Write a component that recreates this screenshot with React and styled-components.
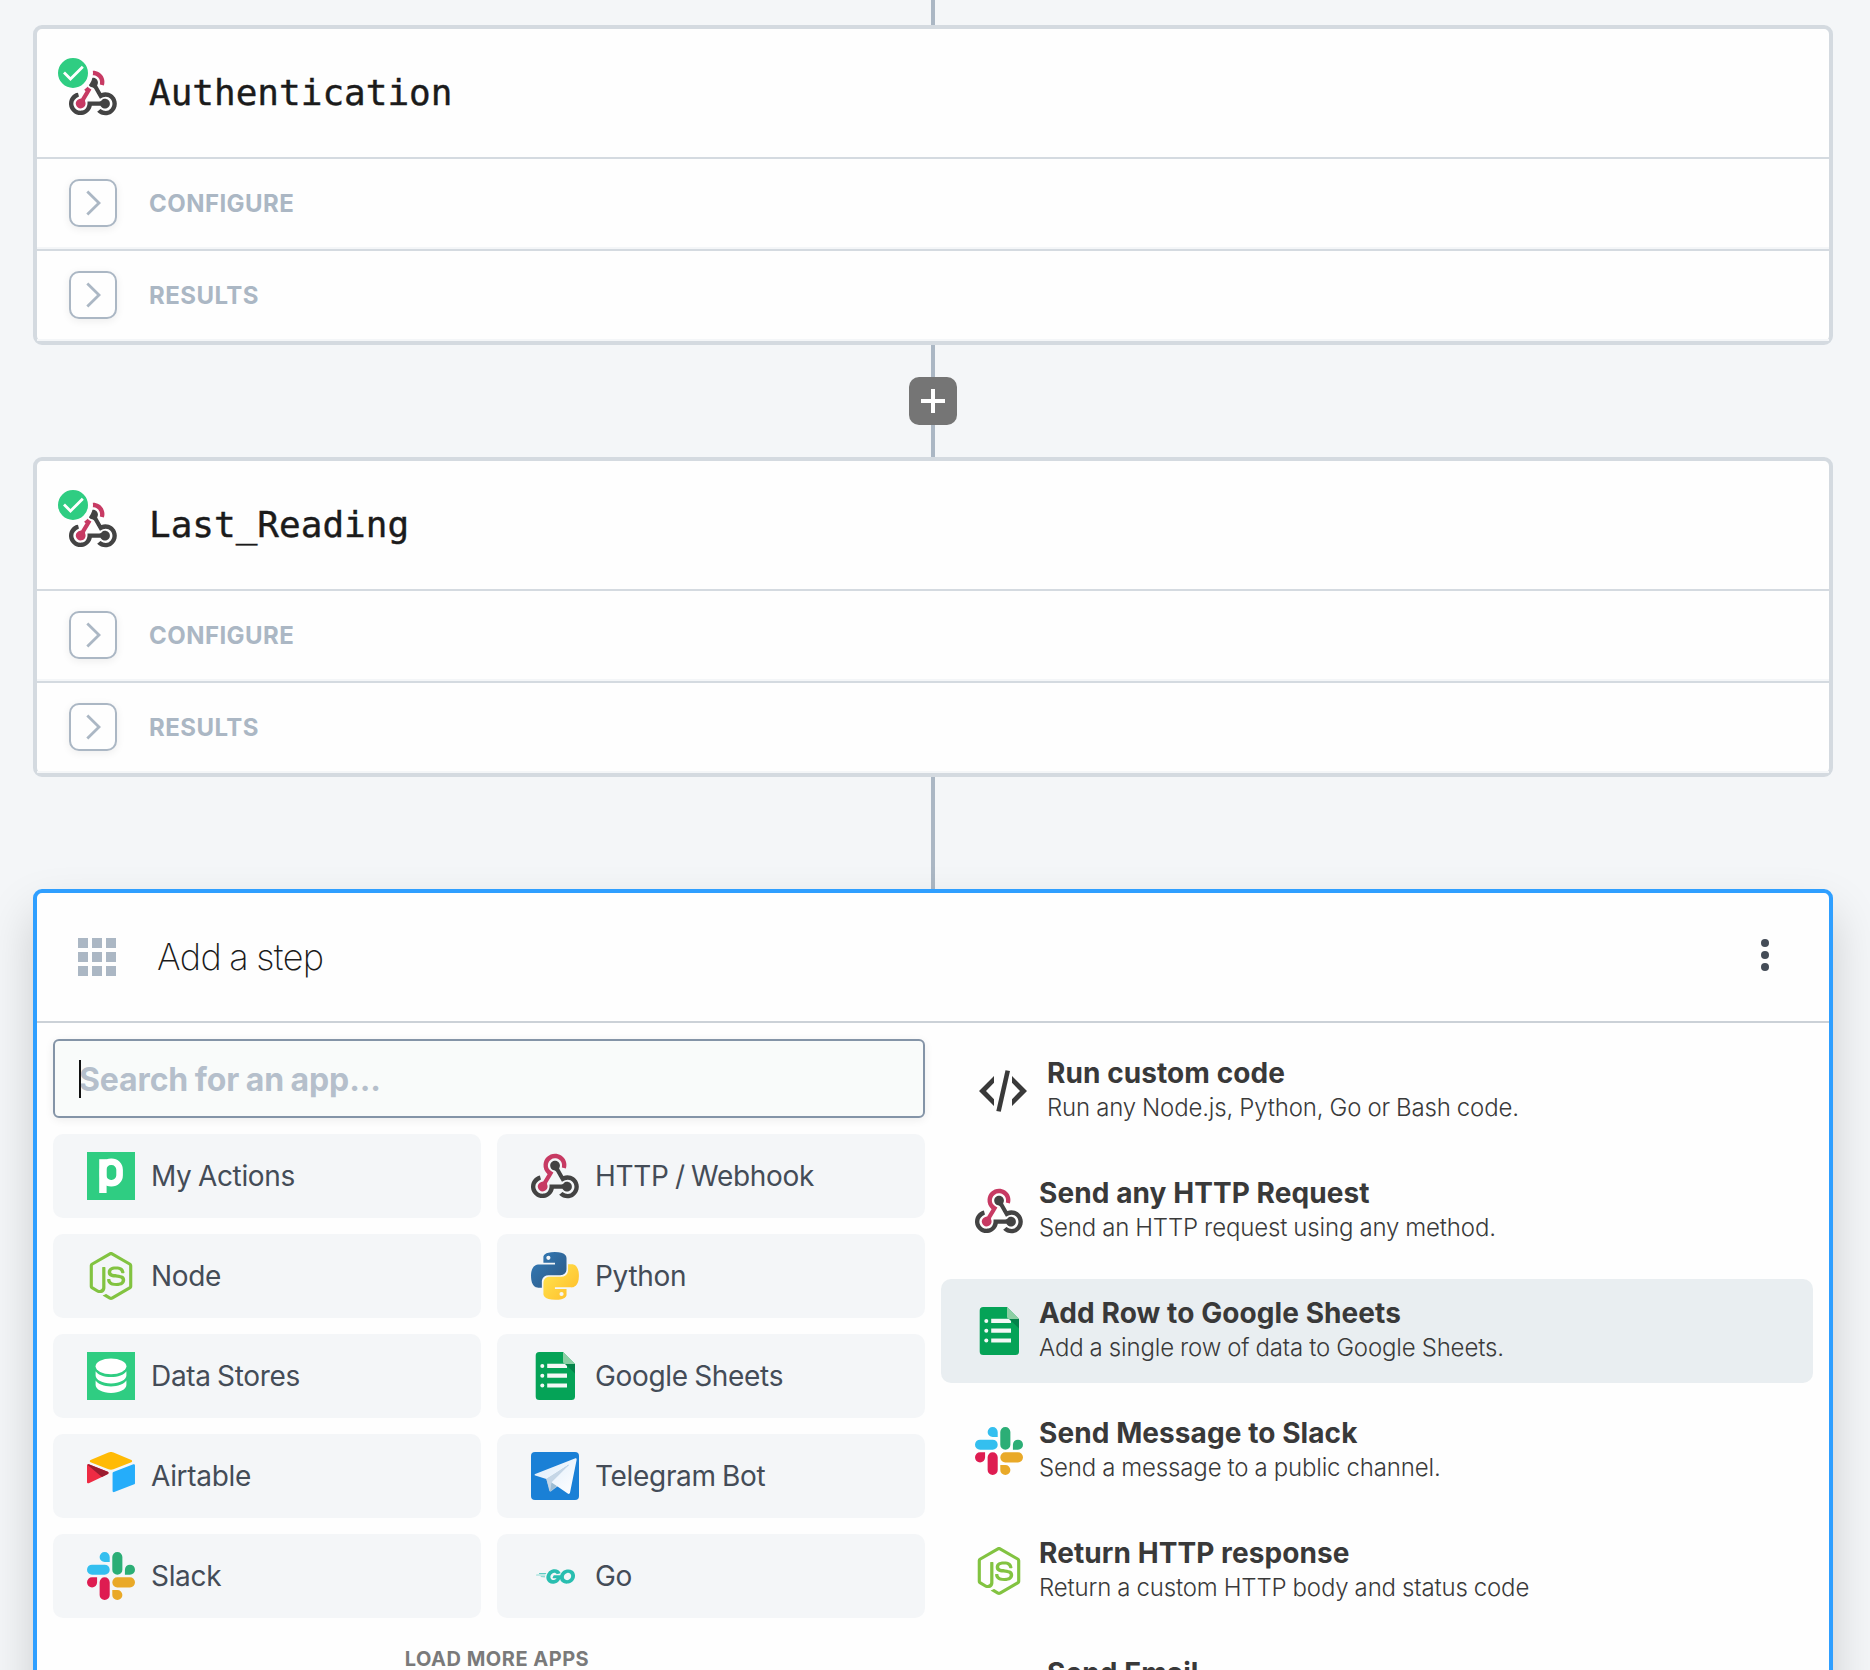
import React from "react";
import styled, { createGlobalStyle } from "styled-components";
import { SiNodedotjs, SiGo } from "react-icons/si";

const colors = {
  page: "#f4f6f8",
  surface: "#fefefe",
  line: "#d4dae0",
  muted: "#abb7c4",
  active: "#2f9fff",
  text: "#444c57",
  green: "#2fcd82",
};

const GlobalStyle = createGlobalStyle`
  * { box-sizing: border-box; }
  body {
    margin: 0;
    background: ${colors.page};
    font-family: Inter, "Liberation Sans", sans-serif;
    -webkit-font-smoothing: antialiased;
  }
`;

const Page = styled.main`
  display: flex;
  flex-direction: column;
  align-items: center;
  width: 1866px;
  height: 1670px;
`;

const Workspace = styled.div`
  width: 1870px;
  height: 1670px;
  overflow: hidden;
`;

const Connector = styled.div`
  flex: none;
  display: flex;
  align-items: center;
  justify-content: center;
  width: 48px;
  height: ${(p) => p.$height}px;
  background: linear-gradient(${colors.muted}, ${colors.muted}) center / 4px 100% no-repeat;
`;

const AddButton = styled.button`
  display: grid;
  place-items: center;
  width: 48px;
  height: 48px;
  padding: 0;
  border: 0;
  border-radius: 10px;
  background: #757575;
`;

const Card = styled.section`
  flex: none;
  width: 1800px;
  border: 4px solid ${(p) => (p.$active ? colors.active : colors.line)};
  border-radius: 9px;
  background: ${colors.surface};
  box-shadow: ${(p) => (p.$active ? "0 24px 48px rgba(0, 0, 0, 0.17)" : "none")};
`;

const StepHeader = styled.header`
  display: flex;
  align-items: center;
  gap: 32px;
  height: 128px;
  padding-left: 32px;
`;

const StepIcon = styled.div`
  position: relative;
  display: flex;
`;

const Badge = styled.span`
  position: absolute;
  top: -16px;
  left: -16px;
  display: grid;
  place-items: center;
  width: 40px;
  height: 40px;
  border: 5px solid ${colors.surface};
  border-radius: 50%;
  background: ${colors.green};
`;

const StepName = styled.h2`
  margin: 0 0 1px;
  font: 400 36px/44px "DejaVu Sans Mono", monospace;
  color: #1b1b1b;
  -webkit-text-stroke: 0.4px #1b1b1b;
`;

const Section = styled.div`
  display: flex;
  align-items: center;
  gap: 32px;
  height: 92px;
  padding: 0 0 2px 32px;
  border-top: 2px solid ${colors.line};
  box-shadow: inset 0 -2px 0 ${colors.page};
`;

const Toggle = styled.button`
  display: grid;
  place-items: center;
  width: 48px;
  height: 48px;
  padding: 0;
  border: 2px solid ${colors.muted};
  border-radius: 10px;
  background: ${colors.surface};
  box-shadow: 0 2px 8px rgba(0, 0, 0, 0.07);
`;

const SectionLabel = styled.span`
  padding-top: 2px;
  font-size: 24px;
  font-weight: 700;
  line-height: 32px;
  letter-spacing: 0.45px;
  color: ${colors.muted};
`;

const AddHeader = styled.header`
  display: flex;
  align-items: center;
  height: 128px;
  padding: 0 60px 0 41px;
`;

const GridGlyph = styled.div`
  display: grid;
  grid-template-columns: repeat(3, 10px);
  grid-auto-rows: 10px;
  gap: 4px;

  i { background: ${colors.muted}; }
`;

const AddTitle = styled.h2`
  flex: 1;
  margin: 0 0 0 41px;
  font-size: 36px;
  font-weight: 200;
  line-height: 44px;
  letter-spacing: -0.55px;
  word-spacing: -1.5px;
  color: #1b1b1b;
`;

const Dots = styled.div`
  display: flex;
  flex-direction: column;
  gap: 4px;
  margin-bottom: 4px;

  i {
    width: 8px;
    height: 8px;
    border-radius: 50%;
    background: ${colors.text};
  }
`;

const AddBody = styled.div`
  display: grid;
  grid-template-columns: 872px 872px;
  gap: 16px;
  height: 760px;
  padding: 16px;
  border-top: 2px solid #cbd1d7;
`;

const SearchField = styled.label`
  display: flex;
  align-items: center;
  height: 79px;
  margin-bottom: 16px;
  padding-left: 24px;
  border: 2px solid #8494a7;
  border-radius: 6px;
  background: #f9fbfa;
  box-shadow: 0 2px 10px rgba(0, 0, 0, 0.07);
`;

const Caret = styled.span`
  width: 2px;
  height: 38px;
  margin-right: -2px;
  background: #111;
  z-index: 1;
`;

const Placeholder = styled.span`
  padding-top: 2px;
  font-size: 32px;
  font-weight: 700;
  line-height: 40px;
  letter-spacing: -0.13px;
  word-spacing: -0.8px;
  color: #b5bfcb;
`;

const AppGrid = styled.div`
  display: grid;
  grid-template-columns: 1fr 1fr;
  grid-auto-rows: 84px;
  gap: 16px;
`;

const AppTile = styled.div`
  display: flex;
  align-items: center;
  gap: 16px;
  padding-left: 34px;
  border-radius: 10px;
  background: #f4f6f8;
  font-size: 28px;
  line-height: 36px;
  letter-spacing: -0.32px;
  word-spacing: -1.2px;
  color: ${colors.text};
`;

const LoadMore = styled.div`
  margin: 28px -16px 0 0;
  text-align: center;
  font-size: 20px;
  font-weight: 700;
  line-height: 26px;
  letter-spacing: 0.5px;
  color: #7a7a7a;
`;

const ActionList = styled.div`
  display: flex;
  flex-direction: column;
  gap: 16px;
`;

const Action = styled.div`
  flex: none;
  display: flex;
  align-items: center;
  gap: 16px;
  height: 104px;
  padding-left: 34px;
  border-radius: 10px;
  background: ${(p) => (p.$selected ? "#e9eef1" : "transparent")};
`;

const IconSlot = styled.span`
  flex: none;
  display: flex;
  align-items: center;
  justify-content: center;
  width: 48px;
  height: 48px;
  margin: 0 ${(p) => (p.$inset ? 4 : 0)}px;
`;

const ActionText = styled.div`
  padding-bottom: 1px;
`;

const ActionTitle = styled.div`
  font-size: 28px;
  font-weight: 700;
  line-height: 35px;
  letter-spacing: 0.08px;
  color: #393939;
`;

const ActionNote = styled.div`
  min-height: 34px;
  font-size: 24px;
  font-weight: 300;
  line-height: 34px;
  letter-spacing: -0.15px;
  word-spacing: -0.5px;
  color: #3a3a3a;
`;

const WebhookIcon = () => (
  <svg width="48" height="48" viewBox="0 -8.5 256 256">
    <path fill="#C73A63" d="M119.54 100.503c-10.61 17.836-20.775 35.108-31.152 52.25-2.665 4.401-3.984 7.986-1.855 13.58 5.878 15.454-2.414 30.493-17.998 34.575-14.697 3.851-29.016-5.808-31.932-21.543-2.584-13.927 8.224-27.58 23.58-29.757 1.286-.184 2.6-.205 4.762-.367l23.358-39.168C73.612 95.465 64.868 78.39 66.803 57.23c1.368-14.957 7.25-27.883 18-38.477 20.59-20.288 52.002-23.573 76.246-8.001 23.284 14.958 33.948 44.094 24.858 69.031-6.854-1.858-13.756-3.732-21.343-5.79 2.854-13.865.743-26.315-8.608-36.981-6.178-7.042-14.106-10.733-23.12-12.093-18.072-2.73-35.815 8.88-41.08 26.618-5.976 20.13 3.069 36.575 27.784 48.967z" />
    <path fill="#434343" d="M149.841 79.41c7.475 13.187 15.065 26.573 22.587 39.836 38.02-11.763 66.686 9.284 76.97 31.817 12.422 27.219 3.93 59.457-20.465 76.25-25.04 17.238-56.707 14.293-78.892-7.851 5.654-4.733 11.336-9.487 17.407-14.566 21.912 14.192 41.077 13.524 55.305-3.282 12.133-14.337 11.87-35.714-.615-49.75-14.408-16.197-33.707-16.691-57.035-1.143-9.677-17.168-19.522-34.199-28.893-51.491-3.16-5.828-6.648-9.21-13.77-10.443-11.893-2.062-19.571-12.275-20.032-23.717-.453-11.316 6.214-21.545 16.634-25.53 10.322-3.949 22.435-.762 29.378 8.014 5.674 7.17 7.477 15.24 4.491 24.083-.83 2.466-1.905 4.852-3.07 7.774z" />
    <path fill="#434343" d="M167.707 187.21h-45.77c-4.387 18.044-13.863 32.612-30.19 41.876-12.693 7.2-26.373 9.641-40.933 7.29-26.808-4.323-48.728-28.456-50.658-55.63-2.184-30.784 18.975-58.147 47.178-64.293 1.947 7.071 3.915 14.21 5.862 21.264-25.876 13.202-34.832 29.836-27.59 50.636 6.375 18.304 24.484 28.337 44.147 24.457 20.08-3.962 30.204-20.65 28.968-47.432 19.036 0 38.088-.197 57.126.097 7.434.117 13.173-.654 18.773-7.208 9.22-10.784 26.191-9.811 36.121.374 10.148 10.409 9.662 27.157-1.077 37.127-10.361 9.62-26.73 9.106-36.424-1.26-1.992-2.136-3.562-4.673-5.533-7.298z" />
  </svg>
);

const PipedreamIcon = () => (
  <svg width="48" height="48" viewBox="0 0 48 48">
    <rect width="48" height="48" fill={colors.green} />
    <path fill="none" stroke="#fff" strokeWidth="7.4" d="M15.9 7.2V41" />
    <rect x="16" y="9.8" width="16.6" height="21.4" rx="8" fill="none" stroke="#fff" strokeWidth="6.6" />
  </svg>
);

const NodeIcon = () => <SiNodedotjs size={48} color="#82c341" />;

const GoIcon = () => <SiGo size={39} color="#29beb0" />;

const DataIcon = () => (
  <svg width="48" height="48" viewBox="0 0 48 48">
    <rect width="48" height="48" fill={colors.green} />
    <g fill="#fff">
      <ellipse cx="24" cy="14.3" rx="15.4" ry="7.9" />
      <path d="M8.6 19.200C11 23.100 17 25 24 25S37 23.100 39.4 19.200V23.500C39.400 27.800 32.500 31.400 24 31.400S8.600 27.800 8.600 23.500z" />
      <path d="M8.6 28.600C11 32.500 17 34.400 24 34.400S37 32.500 39.400 28.600V33C39.400 37.300 32.500 40.900 24 40.900S8.600 37.300 8.600 33z" />
    </g>
  </svg>
);

const AirtableIcon = () => (
  <svg width="48" height="48" viewBox="0 0 256 256">
    <path fill="#FFBA05" d="M114.259 2.701L18.86 42.176c-5.305 2.195-5.25 9.73.089 11.847l95.797 37.989a35.544 35.544 0 0 0 26.208 0l95.799-37.99c5.337-2.115 5.393-9.65.086-11.846L141.442 2.7a35.549 35.549 0 0 0-27.183 0" />
    <path fill="#25ADFA" d="M136.35 112.757v94.902c0 4.514 4.55 7.605 8.746 5.942l106.748-41.435a6.39 6.39 0 0 0 4.035-5.941V71.322c0-4.514-4.551-7.604-8.747-5.941l-106.748 41.434a6.392 6.392 0 0 0-4.035 5.942" />
    <path fill="#EE2B43" d="M111.423 117.654l-31.68 15.296-3.217 1.555L9.65 166.548C5.411 168.593 0 165.504 0 160.795V71.72c0-1.704.874-3.175 2.045-4.283a7.266 7.266 0 0 1 1.618-1.213c1.598-.959 3.878-1.215 5.816-.448l101.41 40.18c5.155 2.045 5.56 9.268.534 11.698" />
    <path fill="#9B1C30" d="M111.423 117.654l-31.68 15.296L2.045 67.438a7.266 7.266 0 0 1 1.618-1.213c1.598-.959 3.878-1.215 5.816-.448l101.41 40.18c5.155 2.045 5.56 9.268.534 11.698" />
  </svg>
);

const SlackIcon = () => (
  <svg width="48" height="48" viewBox="0 0 24 24">
    <path fill="#DE1C51" d="M5.042 15.165a2.528 2.528 0 0 1-2.52 2.523A2.528 2.528 0 0 1 0 15.165a2.527 2.527 0 0 1 2.522-2.52h2.52v2.52zM6.313 15.165a2.527 2.527 0 0 1 2.521-2.52 2.527 2.527 0 0 1 2.521 2.52v6.313A2.528 2.528 0 0 1 8.834 24a2.528 2.528 0 0 1-2.521-2.522v-6.313z" />
    <path fill="#34BFEF" d="M8.834 5.042a2.528 2.528 0 0 1-2.521-2.52A2.528 2.528 0 0 1 8.834 0a2.528 2.528 0 0 1 2.521 2.522v2.52H8.834zM8.834 6.313a2.528 2.528 0 0 1 2.521 2.521 2.528 2.528 0 0 1-2.521 2.521H2.522A2.528 2.528 0 0 1 0 8.834a2.528 2.528 0 0 1 2.522-2.521h6.312z" />
    <path fill="#2CAE76" d="M18.956 8.834a2.528 2.528 0 0 1 2.522-2.521A2.528 2.528 0 0 1 24 8.834a2.528 2.528 0 0 1-2.522 2.521h-2.522V8.834zM17.688 8.834a2.528 2.528 0 0 1-2.523 2.521 2.527 2.527 0 0 1-2.52-2.521V2.522A2.527 2.527 0 0 1 15.165 0a2.528 2.528 0 0 1 2.523 2.522v6.312z" />
    <path fill="#E9A928" d="M15.165 18.956a2.528 2.528 0 0 1 2.523 2.522A2.528 2.528 0 0 1 15.165 24a2.527 2.527 0 0 1-2.52-2.522v-2.522h2.52zM15.165 17.688a2.527 2.527 0 0 1-2.52-2.523 2.526 2.526 0 0 1 2.52-2.52h6.313A2.527 2.527 0 0 1 24 15.165a2.528 2.528 0 0 1-2.522 2.523h-6.313z" />
  </svg>
);

const PythonIcon = () => (
  <svg width="48" height="48" viewBox="0 0 256 255">
    <defs>
      <linearGradient id="py-blue" x1="12%" y1="12%" x2="80%" y2="78%">
        <stop offset="0" stopColor="#3278b4" />
        <stop offset="1" stopColor="#2f5f8d" />
      </linearGradient>
      <linearGradient id="py-yellow" x1="19%" y1="21%" x2="91%" y2="88%">
        <stop offset="0" stopColor="#ffdf4a" />
        <stop offset="1" stopColor="#ffbf2c" />
      </linearGradient>
    </defs>
    <path fill="url(#py-blue)" d="M126.916.072c-64.832 0-60.784 28.115-60.784 28.115l.072 29.128h61.868v8.745H41.631S.145 61.355.145 126.77c0 65.417 36.21 63.097 36.21 63.097h21.61v-30.356s-1.165-36.21 35.632-36.21h61.362s34.475.557 34.475-33.319V33.97S194.67.072 126.916.072zM92.802 19.66a11.12 11.12 0 0 1 11.13 11.13 11.12 11.12 0 0 1-11.13 11.13 11.12 11.12 0 0 1-11.13-11.13 11.12 11.12 0 0 1 11.13-11.13z" />
    <path fill="url(#py-yellow)" d="M128.757 254.126c64.832 0 60.784-28.115 60.784-28.115l-.072-29.127H127.6v-8.745h86.441s41.486 4.705 41.486-60.712c0-65.416-36.21-63.096-36.21-63.096h-21.61v30.355s1.165 36.21-35.632 36.21h-61.362s-34.475-.557-34.475 33.32v56.013s-5.235 33.897 62.518 33.897zm34.114-19.586a11.12 11.12 0 0 1-11.13-11.13 11.12 11.12 0 0 1 11.13-11.131 11.12 11.12 0 0 1 11.13 11.13 11.12 11.12 0 0 1-11.13 11.13z" />
  </svg>
);

const SheetsIcon = () => (
  <svg width="48" height="48" viewBox="0 0 48 48">
    <path fill="#05a357" d="M8.200 0H32L44 12V44.500A3.500 3.500 0 0 1 40.500 48H8.200A3.500 3.500 0 0 1 4.700 44.500V3.500A3.500 3.500 0 0 1 8.200 0z" />
    <g fill="#f4f8f6">
      <circle cx="11.300" cy="14" r="2" />
      <circle cx="11.300" cy="23.700" r="2" />
      <circle cx="11.300" cy="33.500" r="2" />
      <path d="M16.200 11.800H34L36 13.800V16H16.200zM16.200 21.600H36V25.800H16.200zM16.200 31.400H36V35.600H16.200z" />
    </g>
    <path fill="#8ccfa4" d="M32 0L44 12H34.500A2.500 2.500 0 0 1 32 9.500z" />
    <path fill="#04824a" d="M34.200 12H44V21.500z" />
  </svg>
);

const TelegramIcon = () => (
  <svg width="48" height="48" viewBox="0 0 48 48">
    <defs>
      <linearGradient id="tg-plane" x1="0" y1="0" x2="1" y2="1">
        <stop offset="0" stopColor="#dcebfa" />
        <stop offset="1" stopColor="#fff" />
      </linearGradient>
    </defs>
    <rect width="48" height="48" rx="4" fill="#1a80d6" />
    <path fill="#b9cfe0" d="M15 25.500L37.500 13L27 34L19.800 39.400C19 39.800 18.500 39.400 18.300 38.700z" />
    <path fill="#9dbdd4" d="M19 39.500L20.600 30.500L26 33.800z" />
    <path fill="url(#tg-plane)" d="M4.200 21.900L43.800 6.500C45.200 6 45.900 6.700 45.600 8L39 40.800C38.700 42 37.700 42.200 36.700 41.500L20.400 30.200L38.200 12.600L15.300 27L4.300 23.600C3.200 23.200 3.300 22.300 4.200 21.900z" />
    <path fill="#c5d6e6" d="M15.300 27L38.200 12.600L20.400 30.200L19 39z" />
  </svg>
);

const CodeIcon = () => (
  <svg width="48" height="48" viewBox="0 0 48 48" fill="#393939">
    <path d="M0 24L15 9V15.800L7 24L15 32.200V39z" />
    <path d="M48 24L33 9V15.800L41 24L33 32.200V39z" />
    <path d="M26.500 3.200L31 4L21.800 44.800L17.300 44z" />
  </svg>
);

const MailIcon = () => (
  <svg width="48" height="48" viewBox="0 0 48 48" fill="none" stroke="#393939" strokeWidth="4">
    <path d="M4 9H44V39H4zM4 11L24 27L44 11" />
  </svg>
);

const CheckIcon = () => (
  <svg width="22" height="18" viewBox="0 0 22 18" fill="none" stroke="#fff" strokeWidth="2.800">
    <path d="M2 8.500L8.500 15L20.800 2.700" />
  </svg>
);

const ChevronIcon = () => (
  <svg width="24" height="28" viewBox="0 0 24 28" fill="none" stroke={colors.muted} strokeWidth="2.800">
    <path d="M6.300 2.500L18 14L6.300 25.500" />
  </svg>
);

const PlusIcon = () => (
  <svg width="24" height="24" viewBox="0 0 24 24" fill="#fff">
    <path d="M10 0h4v10h10v4H14v10h-4V14H0v-4h10z" />
  </svg>
);

const apps = [
  ["My Actions", PipedreamIcon],
  ["HTTP / Webhook", WebhookIcon],
  ["Node", NodeIcon],
  ["Python", PythonIcon],
  ["Data Stores", DataIcon],
  ["Google Sheets", SheetsIcon],
  ["Airtable", AirtableIcon],
  ["Telegram Bot", TelegramIcon],
  ["Slack", SlackIcon],
  ["Go", GoIcon],
];

const actions = [
  { title: "Run custom code", note: "Run any Node.js, Python, Go or Bash code.", Icon: CodeIcon, inset: true },
  { title: "Send any HTTP Request", note: "Send an HTTP request using any method.", Icon: WebhookIcon },
  { title: "Add Row to Google Sheets", note: "Add a single row of data to Google Sheets.", Icon: SheetsIcon, selected: true },
  { title: "Send Message to Slack", note: "Send a message to a public channel.", Icon: SlackIcon },
  { title: "Return HTTP response", note: "Return a custom HTTP body and status code", Icon: NodeIcon },
  { title: "Send Email", note: "", Icon: MailIcon, inset: true },
];

const StepCard = ({ name }) => (
  <Card>
    <StepHeader>
      <StepIcon>
        <WebhookIcon />
        <Badge><CheckIcon /></Badge>
      </StepIcon>
      <StepName>{name}</StepName>
    </StepHeader>
    {["CONFIGURE", "RESULTS"].map((label) => (
      <Section key={label}>
        <Toggle aria-label={label}><ChevronIcon /></Toggle>
        <SectionLabel>{label}</SectionLabel>
      </Section>
    ))}
  </Card>
);

export default function App() {
  return (
    <Workspace>
      <GlobalStyle />
      <Page>
        <Connector $height={25} />
        <StepCard name="Authentication" />
        <Connector $height={112}>
          <AddButton aria-label="Add step"><PlusIcon /></AddButton>
        </Connector>
        <StepCard name="Last_Reading" />
        <Connector $height={112} />
        <Card $active>
          <AddHeader>
            <GridGlyph>{Array.from({ length: 9 }, (_, i) => <i key={i} />)}</GridGlyph>
            <AddTitle>Add a step</AddTitle>
            <Dots><i /><i /><i /></Dots>
          </AddHeader>
          <AddBody>
            <div>
              <SearchField>
                <Caret />
                <Placeholder>Search for an app...</Placeholder>
              </SearchField>
              <AppGrid>
                {apps.map(([name, Icon]) => (
                  <AppTile key={name}>
                    <IconSlot><Icon /></IconSlot>
                    {name}
                  </AppTile>
                ))}
              </AppGrid>
              <LoadMore>LOAD MORE APPS</LoadMore>
            </div>
            <ActionList>
              {actions.map(({ title, note, Icon, inset, selected }) => (
                <Action key={title} $selected={selected}>
                  <IconSlot $inset={inset}><Icon /></IconSlot>
                  <ActionText>
                    <ActionTitle>{title}</ActionTitle>
                    <ActionNote>{note}</ActionNote>
                  </ActionText>
                </Action>
              ))}
            </ActionList>
          </AddBody>
        </Card>
      </Page>
    </Workspace>
  );
}
